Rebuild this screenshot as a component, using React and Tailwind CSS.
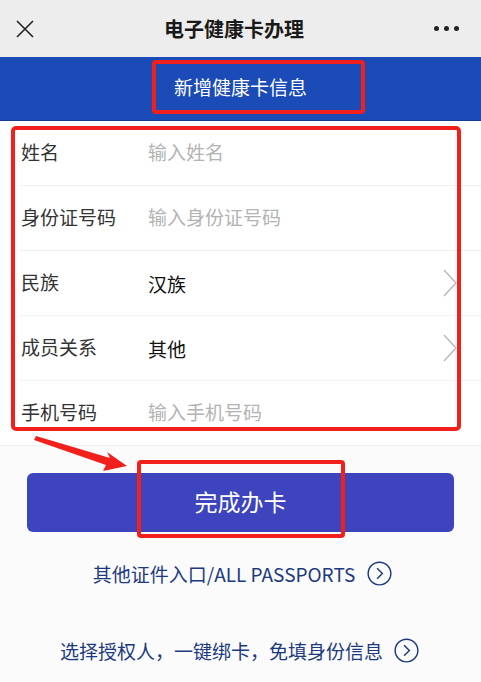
import React from "react";

const font = { fontFamily: '"Noto Sans CJK SC", "Noto Sans", sans-serif' };

function Chevron() {
  return (
    <svg width="16" height="28" viewBox="0 0 16 28" className="shrink-0">
      <path d="M2 1 L14 14 L2 27" fill="none" stroke="#b5b5b5" strokeWidth="1.3" />
    </svg>
  );
}

function CircleArrow({ size = 25 }) {
  return (
    <svg width={size} height={size} viewBox="0 0 26 26" className="shrink-0">
      <circle cx="13" cy="13" r="11.8" fill="none" stroke="#1d3a80" strokeWidth="1.5" />
      <path d="M10.5 7.5 L16 13 L10.5 18.5" fill="none" stroke="#1d3a80" strokeWidth="1.5" />
    </svg>
  );
}

function Row({ label, value, placeholder, chevron }) {
  return (
    <div className="flex h-[64px] items-center pl-[21px] pr-[23px]">
      <div className="w-[127px] text-[19px] text-[#333] leading-none -mt-[3px]">{label}</div>
      <div className={"flex-1 text-[19px] leading-none " + (value ? "text-[#111] mt-[1px]" : "text-[#b3b3b3] -mt-[3px]")}>
        {value || placeholder}
      </div>
      {chevron && <Chevron />}
    </div>
  );
}

export default function App() {
  return (
    <div className="relative w-[481px] h-[682px] bg-[#fbfbfb] overflow-hidden" style={font}>
      {/* top bar */}
      <div className="flex h-[57px] items-center justify-between bg-[#ededed] px-[16px]">
        <svg width="18" height="18" viewBox="0 0 18 18">
          <path d="M1 1 L17 17 M17 1 L1 17" stroke="#222" strokeWidth="1.6" />
        </svg>
        <div className="text-[20px] font-bold text-[#1a1a1a] leading-none">电子健康卡办理</div>
        <div className="flex gap-[5px] pr-[6px]">
          <span className="h-[5px] w-[5px] rounded-full bg-[#222]" />
          <span className="h-[5px] w-[5px] rounded-full bg-[#222]" />
          <span className="h-[5px] w-[5px] rounded-full bg-[#222]" />
        </div>
      </div>

      {/* banner */}
      <div className="flex h-[64px] items-center justify-center bg-[#1b4bb6] border-b border-[#163c8f]">
        <div className="text-[19px] text-white leading-none -mt-[5px]">新增健康卡信息</div>
      </div>

      {/* form */}
      <div className="bg-white">
        <Row label="姓名" placeholder="输入姓名" />
        <div className="ml-[21px] h-px bg-[#f0f0f0]" />
        <Row label="身份证号码" placeholder="输入身份证号码" />
        <div className="ml-[21px] h-px bg-[#f0f0f0]" />
        <Row label="民族" value="汉族" chevron />
        <div className="ml-[21px] h-px bg-[#f0f0f0]" />
        <Row label="成员关系" value="其他" chevron />
        <div className="ml-[21px] h-px bg-[#f0f0f0]" />
        <Row label="手机号码" placeholder="输入手机号码" />
        <div className="h-px bg-[#f0f0f0]" />
      </div>

      {/* button */}
      <div className="px-[27px] pt-[27px]">
        <div className="flex h-[59px] items-center justify-center rounded-[6px] bg-[#3d44bd]">
          <span className="text-[23px] text-white leading-none -mt-[2px]">完成办卡</span>
        </div>
      </div>

      {/* links */}
      <div className="mt-[29px] flex items-center justify-center gap-[12px] pl-[4px]">
        <span className="text-[19px] text-[#1d3a80] leading-none">其他证件入口/ALL PASSPORTS</span>
        <CircleArrow />
      </div>
      <div className="mt-[52px] flex items-center justify-center gap-[11px] pr-[2px]">
        <span className="text-[19px] text-[#1d3a80] leading-none">选择授权人，一键绑卡，免填身份信息</span>
        <CircleArrow />
      </div>

      {/* annotations */}
      <div className="absolute left-[152px] top-[60px] h-[54px] w-[213px] rounded-[4px] border-[4px] border-[#f2201d]" />
      <div className="absolute left-[11px] top-[126px] h-[305px] w-[450px] rounded-[5px] border-[4px] border-[#f2201d]" />
      <div className="absolute left-[137px] top-[460px] h-[78px] w-[208px] rounded-[4px] border-[4px] border-[#f2201d]" />
      <svg className="absolute left-0 top-0" width="481" height="682" viewBox="0 0 481 682">
        <polygon points="34,440 36,436 110,458 107,452 127,466 103,471 106,465" fill="#f2201d" />
      </svg>
    </div>
  );
}
